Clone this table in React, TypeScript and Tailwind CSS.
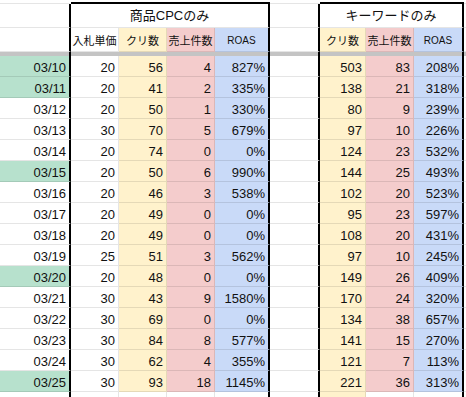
import React from 'react'

type Row = [string, string, string, string, string, string, string, string, boolean]

const rows: Row[] = [
  ['03/10', '20', '56', '4', '827%', '503', '83', '208%', true],
  ['03/11', '20', '41', '2', '335%', '138', '21', '318%', true],
  ['03/12', '20', '50', '1', '330%', '80', '9', '239%', false],
  ['03/13', '30', '70', '5', '679%', '97', '10', '226%', false],
  ['03/14', '20', '74', '0', '0%', '124', '23', '532%', false],
  ['03/15', '20', '50', '6', '990%', '144', '25', '493%', true],
  ['03/16', '20', '46', '3', '538%', '102', '20', '523%', false],
  ['03/17', '20', '49', '0', '0%', '95', '23', '597%', false],
  ['03/18', '20', '49', '0', '0%', '108', '20', '431%', false],
  ['03/19', '25', '51', '3', '562%', '97', '10', '245%', false],
  ['03/20', '20', '48', '0', '0%', '149', '26', '409%', true],
  ['03/21', '30', '43', '9', '1580%', '170', '24', '320%', false],
  ['03/22', '30', '69', '0', '0%', '134', '38', '657%', false],
  ['03/23', '30', '84', '8', '577%', '141', '15', '270%', false],
  ['03/24', '30', '62', '4', '355%', '121', '7', '113%', false],
  ['03/25', '30', '93', '18', '1145%', '221', '36', '313%', true],
]

// column widths incl. right border; black ones mark the two boxed ranges
const W = {
  a: 'w-[71px] border-r-2 border-r-black',
  b: 'w-[48px] border-r border-r-black/10',
  c: 'w-[48px] border-r border-r-black/10',
  d: 'w-[48px] border-r border-r-black/10',
  e: 'w-[55px] border-r-2 border-r-black',
  f: 'w-[50px] border-r-2 border-r-black',
  g: 'w-[46px] border-r border-r-black/10',
  h: 'w-[48px] border-r border-r-black/10',
  i: 'w-[50px] border-r-2 border-r-black',
  j: 'flex-1',
}

const yellow = 'bg-[#fff2cc]'
const red = 'bg-[#f4cccc]'
const blue = 'bg-[#c9daf8]'

function Cell({ w, bg = 'bg-white', children }: { w: string; bg?: string; children?: React.ReactNode }) {
  return (
    <div className={`${w} ${bg} shrink-0 h-full border-b border-b-black/10 flex items-end justify-end px-[3px] pb-[1px] leading-[15px] overflow-hidden`}>
      {children}
    </div>
  )
}

function Head({ w, bg = 'bg-white', children }: { w: string; bg?: string; children?: React.ReactNode }) {
  return (
    <div className={`${w} ${bg} shrink-0 h-full border-b border-b-black/10 flex items-end justify-center pb-[3px] text-[11px] leading-[14px] overflow-hidden whitespace-nowrap`}>
      {children}
    </div>
  )
}

export default function App() {
  return (
    <div
      className="w-[466px] h-[397px] overflow-hidden bg-white text-[13px] text-[#111]"
      style={{ fontFamily: '"Liberation Sans", "Noto Sans CJK JP", sans-serif' }}
    >
      {/* partial row above the boxes */}
      <div className="flex h-[4px]">
        <div className="w-[71px] h-full border-b border-b-black/10 border-r-2 border-r-black/0" />
        <div className="w-[199px] h-full border-b-2 border-b-black" />
        <div className="w-[50px] h-full border-b border-b-black/10" />
        <div className="w-[144px] h-full border-b-2 border-b-black" />
        <div className="flex-1 h-full border-b border-b-black/10" />
      </div>

      {/* title row */}
      <div className="flex h-[24px]">
        <Head w={W.a} />
        <div className="w-[199px] h-full border-r-2 border-r-black border-b border-b-black/10 flex items-end justify-center pb-[3px] text-[13px] leading-[16px]">
          商品CPCのみ
        </div>
        <Head w={W.f} />
        <div className="w-[144px] h-full border-r-2 border-r-black border-b border-b-black/10 flex items-end justify-center pb-[3px] text-[13px] leading-[16px]">
          キーワードのみ
        </div>
        <Head w={W.j} />
      </div>

      {/* column headers */}
      <div className="flex h-[24px]">
        <Head w={W.a} />
        <Head w={W.b}>入札単価</Head>
        <Head w={W.c} bg={yellow}>クリ数</Head>
        <Head w={W.d} bg={red}>売上件数</Head>
        <Head w={W.e} bg={blue}><span className="text-[10px]">ROAS</span></Head>
        <Head w={W.f} />
        <Head w={W.g} bg={yellow}>クリ数</Head>
        <Head w={W.h} bg={red}>売上件数</Head>
        <Head w={W.i} bg={blue}><span className="text-[10px]">ROAS</span></Head>
        <Head w={W.j} />
      </div>

      {/* frozen divider */}
      <div className="flex h-[4px] bg-[#c4c4c4]">
        <div className={`${W.a} h-full`} />
        <div className="w-[144px] h-full" />
        <div className={`${W.e} h-full`} />
        <div className={`${W.f} h-full`} />
        <div className="w-[94px] h-full" />
        <div className={`${W.i} h-full`} />
      </div>

      {rows.map((r) => (
        <div key={r[0]} className="flex h-[21px]">
          <Cell w={W.a} bg={r[8] ? 'bg-[#b7e1cd]' : 'bg-white'}>{r[0]}</Cell>
          <Cell w={W.b}>{r[1]}</Cell>
          <Cell w={W.c} bg={yellow}>{r[2]}</Cell>
          <Cell w={W.d} bg={red}>{r[3]}</Cell>
          <Cell w={W.e} bg={blue}>{r[4]}</Cell>
          <Cell w={W.f} />
          <Cell w={W.g} bg={yellow}>{r[5]}</Cell>
          <Cell w={W.h} bg={red}>{r[6]}</Cell>
          <Cell w={W.i} bg={blue}>{r[7]}</Cell>
          <Cell w={W.j} />
        </div>
      ))}

      <div className="flex h-[21px]">
        <Cell w={W.a} />
        <Cell w={W.b} />
        <Cell w={W.c} />
        <Cell w={W.d} />
        <Cell w={W.e} />
        <Cell w={W.f} />
        <Cell w={W.g} bg={yellow} />
        <Cell w={W.h} />
        <Cell w={W.i} />
        <Cell w={W.j} />
      </div>
    </div>
  )
}
